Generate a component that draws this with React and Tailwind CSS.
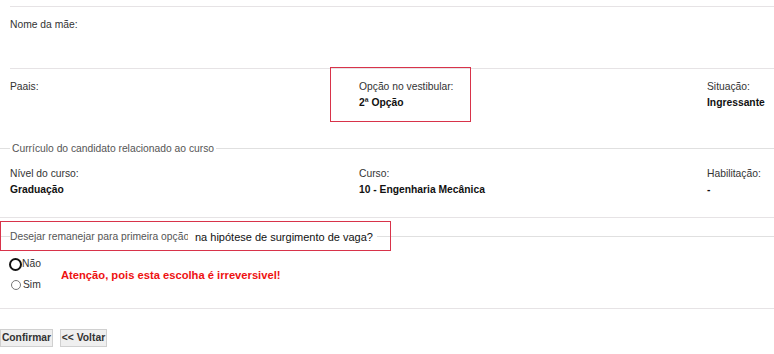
import React from "react";

export default function App() {
  return (
    <div className="relative w-[774px] h-[354px] overflow-hidden bg-white font-['Liberation_Sans',Arial,sans-serif] text-[10.3px] leading-[16px] text-[#333]">
      <div className="h-[6px]" />
      <div className="ml-[10px] border-t border-[#e6e3e5]" />
      <div className="h-[61px] pl-[10px] pt-[10px]">Nome da mãe:</div>
      <div className="ml-[10px] border-t border-[#e6e3e5]" />
      <div className="h-[71px] pt-[10px] pl-[10px] grid grid-cols-[349px_348px_349px] w-[1060px]">
        <div>
          <div>Paais:</div>
        </div>
        <div>
          <div>Opção no vestibular:</div>
          <div className="font-bold text-[#111]">2ª Opção</div>
        </div>
        <div>
          <div>Situação:</div>
          <div className="font-bold text-[#111]">Ingressante</div>
        </div>
      </div>
      <div className="h-[17px] flex items-center">
        <div className="w-[10px] border-t border-[#e0e0e0]" />
        <span className="px-[2px] text-[#555]">Currículo do candidato relacionado ao curso</span>
        <div className="flex-1 border-t border-[#e0e0e0]" />
      </div>
      <div className="h-[60px] pt-[9px] pl-[10px] grid grid-cols-[349px_348px_349px] w-[1060px]">
        <div>
          <div>Nível do curso:</div>
          <div className="font-bold text-[#111]">Graduação</div>
        </div>
        <div>
          <div>Curso:</div>
          <div className="font-bold text-[#111]">10 - Engenharia Mecânica</div>
        </div>
        <div>
          <div>Habilitação:</div>
          <div className="font-bold text-[#111]">-</div>
        </div>
      </div>
      <div className="border-t border-[#e6e3e5]" />
      <div className="h-[10px]" />
      <div className="h-[17px] flex items-center">
        <div className="w-[10px] border-t border-[#e0e0e0]" />
        <span className="w-[178px] overflow-hidden whitespace-nowrap text-[#555]">Desejar remanejar para primeira opção</span>
        <span className="ml-[7px] text-[11px] text-[#111] whitespace-nowrap">na hipótese de surgimento de vaga?</span>
        <div className="ml-[4px] flex-1 border-t border-[#e0e0e0]" />
      </div>
      <div className="h-[11px]" />
      <div className="flex items-center">
        <div className="w-[61px] flex flex-col gap-[5px]">
          <div className="h-[16px] flex items-center">
            <span className="ml-[9px] w-[13px] h-[13px] rounded-full border-2 border-[#111] bg-white" />
            <span>Não</span>
          </div>
          <div className="h-[16px] flex items-center">
            <span className="ml-[11px] w-[10px] h-[10px] rounded-full border border-[#767676] bg-white" />
            <span className="ml-[2px]">Sim</span>
          </div>
        </div>
        <div className="font-bold text-[11.2px] text-[#ee1111]">Atenção, pois esta escolha é irreversivel!</div>
      </div>
      <div className="h-[15px]" />
      <div className="border-t border-[#e6e3e5]" />
      <div className="h-[20px]" />
      <div className="flex gap-[7px]">
        <button className="h-[18px] w-[53px] border border-[#d0d0d0] bg-[#efefef] font-bold text-[10.3px] text-[#333] leading-[16px]">Confirmar</button>
        <button className="h-[18px] w-[47px] border border-[#d0d0d0] bg-[#efefef] font-bold text-[10.3px] text-[#333] leading-[16px]">&lt;&lt; Voltar</button>
      </div>

      <div className="absolute left-[330px] top-[67px] w-[141px] h-[55px] border border-[#d8334a]" />
      <div className="absolute left-0 top-[221px] w-[391px] h-[30px] border border-[#d8334a]" />
    </div>
  );
}
